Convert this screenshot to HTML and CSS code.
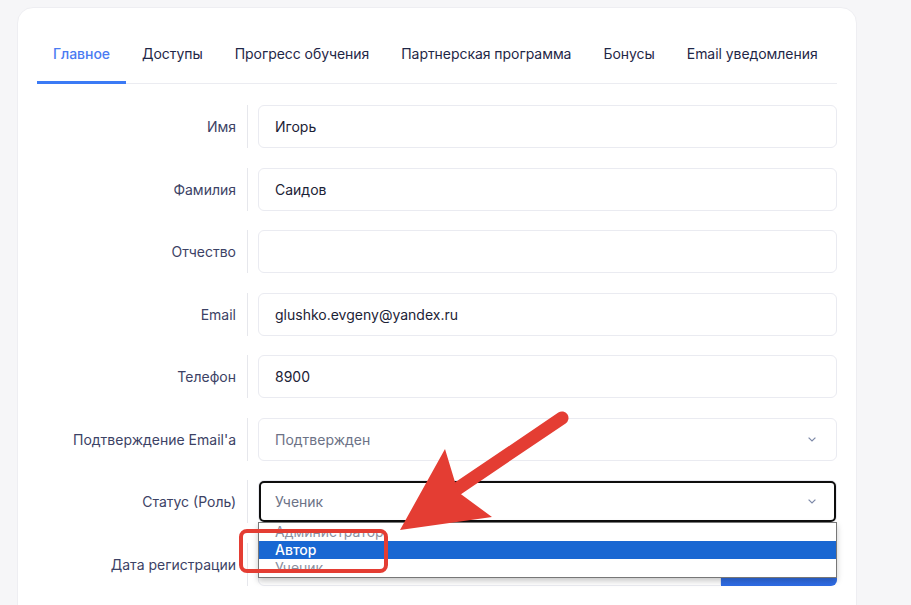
FILE: index.html
```html
<!DOCTYPE html>
<html lang="ru">

<head>
    <meta charset="UTF-8">
    <title>Пользователь</title>
    <link rel="stylesheet" href="styles.css">
</head>

<body>
    <div class="card">
        <div class="tabs">
            <div class="tab active">Главное</div>
            <div class="tab">Доступы</div>
            <div class="tab">Прогресс обучения</div>
            <div class="tab">Партнерская программа</div>
            <div class="tab">Бонусы</div>
            <div class="tab">Email уведомления</div>
        </div>

        <div class="form">
            <div class="row">
                <div class="label">Имя</div>
                <div class="field">Игорь</div>
            </div>
            <div class="row">
                <div class="label">Фамилия</div>
                <div class="field">Саидов</div>
            </div>
            <div class="row">
                <div class="label">Отчество</div>
                <div class="field"></div>
            </div>
            <div class="row">
                <div class="label">Email</div>
                <div class="field">glushko.evgeny@yandex.ru</div>
            </div>
            <div class="row">
                <div class="label">Телефон</div>
                <div class="field">8900</div>
            </div>
            <div class="row">
                <div class="label">Подтверждение Email'a</div>
                <div class="field select">
                    <span class="muted">Подтвержден</span>
                    <svg class="chevron" width="8" height="5" viewBox="0 0 8 5"><path d="M0.6 0.6 L4 4 L7.4 0.6" fill="none" stroke="#7d89a8" stroke-width="1.2"/></svg>
                </div>
            </div>
            <div class="row">
                <div class="label">Статус (Роль)</div>
                <div class="field select focus">
                    <span class="muted">Ученик</span>
                    <svg class="chevron" width="8" height="5" viewBox="0 0 8 5"><path d="M0.6 0.6 L4 4 L7.4 0.6" fill="none" stroke="#7d89a8" stroke-width="1.2"/></svg>
                    <div class="dropdown">
                        <div class="option">Администратор</div>
                        <div class="option selected">Автор</div>
                        <div class="option">Ученик</div>
                    </div>
                </div>
            </div>
            <div class="row">
                <div class="label">Дата регистрации</div>
                <div class="group">
                    <div class="field grow"></div>
                    <div class="btn"></div>
                </div>
            </div>
        </div>
    </div>

    <!-- annotation on top of the screenshot -->
    <svg class="annotation" width="911" height="605" viewBox="0 0 911 605">
        <line x1="562" y1="418" x2="454" y2="491" stroke="#e43d33" stroke-width="13" stroke-linecap="round"/>
        <polygon points="400,530 445,449 458,492 492,517" fill="#e43d33"/>
        <rect x="241" y="531" width="145" height="40" rx="6" fill="none" stroke="#e43d33" stroke-width="4"/>
    </svg>
</body>

</html>
```

FILE: styles.css
```css
* {
    box-sizing: border-box;
}

body {
    margin: 0;
    height: 605px;
    overflow: hidden;
    position: relative;
    background: #f6f6f8;
    font-family: Inter, "Noto Sans", sans-serif;
    font-size: 14px;
    color: #1c2236;
}

.card {
    width: 840px;
    margin: 7px 0 0 17px;
    padding: 19px 19px 40px;
    background: #fff;
    border: 1px solid #eeeef2;
    border-radius: 16px;
}

.tabs {
    display: flex;
    border-bottom: 1px solid #ebecf1;
    margin-bottom: 21px;
}

.tab {
    flex-shrink: 0;
    white-space: nowrap;
    padding: 17px 16px;
    line-height: 20px;
    letter-spacing: -0.05px;
    color: #1f2747;
    border-bottom: 3px solid transparent;
    margin-bottom: -1px;
}

.tab.active {
    color: #4a7bf2;
    font-weight: 500;
    border-bottom-color: #3b7af5;
}

.form {
    display: flex;
    flex-direction: column;
    gap: 19.5px;
}

.row {
    display: grid;
    grid-template-columns: 211px 1fr;
    column-gap: 10px;
    height: 43px;
}

.label {
    display: flex;
    align-items: center;
    justify-content: flex-end;
    padding-right: 11px;
    border-right: 1px solid #e6e7ec;
    color: #3c4265;
}

.field {
    position: relative;
    display: flex;
    align-items: center;
    padding: 0 20px 0 16px;
    background: #fff;
    border: 1px solid #eaebf1;
    border-radius: 6px;
}

.muted {
    color: #6c7286;
}

.chevron {
    margin-left: auto;
}

.field.focus {
    outline: 2px solid #0e0e0e;
    outline-offset: -3px;
}

.dropdown {
    position: absolute;
    top: 100%;
    left: -1px;
    right: -1px;
    z-index: 5;
    background: #fff;
    border: 1px solid #777;
    box-shadow: 0 3px 6px rgba(0, 0, 0, 0.22);
}

.option {
    height: 18px;
    line-height: 18px;
    padding-left: 16px;
    color: #8b90a0;
}

.option.selected {
    background: #1967d2;
    color: #fff;
    font-weight: 500;
}

.group {
    display: flex;
}

.grow {
    flex: 1;
    border-radius: 6px 0 0 6px;
}

.btn {
    width: 116px;
    background: linear-gradient(#3d7cf0, #2e6be4);
    border-radius: 0 6px 6px 0;
}

.annotation {
    position: absolute;
    top: 0;
    left: 0;
    z-index: 10;
    pointer-events: none;
}
```
